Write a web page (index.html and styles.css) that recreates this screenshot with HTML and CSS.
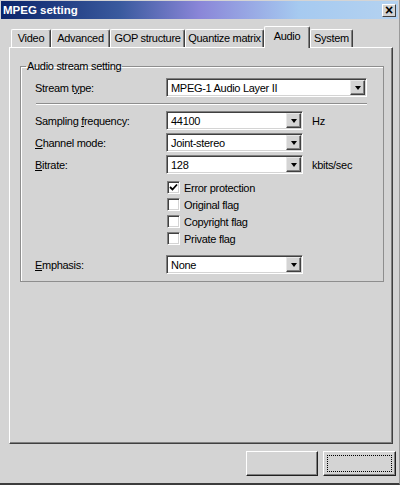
FILE: index.html
```html
<!DOCTYPE html>
<html lang="en">
<head>
    <meta charset="UTF-8">
    <title>MPEG setting</title>
    <link rel="stylesheet" href="styles.css">
</head>
<body>
    <div class="window">
        <div class="titlebar">
            <span class="title">MPEG setting</span>
            <span class="close-btn">&times;</span>
        </div>

        <div class="tabs">
            <div class="tab tab-video">Video</div>
            <div class="tab tab-advanced">Advanced</div>
            <div class="tab tab-gop">GOP structure</div>
            <div class="tab tab-quant">Quantize matrix</div>
            <div class="tab tab-audio active">Audio</div>
            <div class="tab tab-system">System</div>
        </div>

        <div class="panel">
            <fieldset class="group">
                <legend>Audio stream setting</legend>

                <div class="row">
                    <span class="label">Stream t<u>y</u>pe:</span>
                    <div class="combo combo-wide">
                        <span class="value">MPEG-1 Audio Layer II</span>
                        <span class="arrow"></span>
                    </div>
                </div>

                <div class="separator"></div>

                <div class="row">
                    <span class="label">Sampling <u>f</u>requency:</span>
                    <div class="combo">
                        <span class="value">44100</span>
                        <span class="arrow"></span>
                    </div>
                    <span class="unit">Hz</span>
                </div>
                <div class="row">
                    <span class="label"><u>C</u>hannel mode:</span>
                    <div class="combo">
                        <span class="value">Joint-stereo</span>
                        <span class="arrow"></span>
                    </div>
                </div>
                <div class="row">
                    <span class="label"><u>B</u>itrate:</span>
                    <div class="combo">
                        <span class="value">128</span>
                        <span class="arrow"></span>
                    </div>
                    <span class="unit">kbits/sec</span>
                </div>

                <div class="checks">
                    <div class="check">
                        <span class="box">
                            <svg width="11" height="11" viewBox="0 0 11 11"><polyline points="2,5 4.5,7.5 9,2.5" fill="none" stroke="#000" stroke-width="1.8"/></svg>
                        </span>
                        Error protection
                    </div>
                    <div class="check"><span class="box"></span>Original flag</div>
                    <div class="check"><span class="box"></span>Copyright flag</div>
                    <div class="check"><span class="box"></span>Private flag</div>
                </div>

                <div class="row">
                    <span class="label"><u>E</u>mphasis:</span>
                    <div class="combo">
                        <span class="value">None</span>
                        <span class="arrow"></span>
                    </div>
                </div>
            </fieldset>
        </div>

        <div class="footer">
            <button class="btn"></button>
            <button class="btn btn-default"><span class="focus"></span></button>
        </div>
    </div>
</body>
</html>
```

FILE: styles.css
```css
body {
    margin: 0;
    width: 400px;
    height: 485px;
    background: #d4d4d4;
    font-family: 'Liberation Sans', Arial, sans-serif;
    font-size: 11px;
    letter-spacing: -0.3px;
    color: #000;
    overflow: hidden;
}
.window {
    height: 485px;
    box-sizing: border-box;
    border-bottom: 2px solid #3c3c3c;
    border-right: 1px solid #9a9a9a;
    padding-bottom: 1px;
    display: flex;
    flex-direction: column;
}
.titlebar {
    height: 18px;
    margin: 1px 1px 0 1px;
    padding: 0 2px 0 2px;
    display: flex;
    align-items: center;
    justify-content: space-between;
    background: linear-gradient(90deg, #0a246a 0%, #3a5a9e 30%, #8a86d8 50%, #a6caf0 75%, #b4d2f0 100%);
}
.title {
    color: #fff;
    font-weight: bold;
    font-size: 11.5px;
    letter-spacing: 0;
}
.close-btn {
    width: 14px;
    height: 13px;
    box-sizing: border-box;
    background: #d4d4d4;
    border: 1px solid;
    border-color: #fff #404040 #404040 #fff;
    font-size: 14px;
    font-weight: bold;
    line-height: 10px;
    text-align: center;
    letter-spacing: 0;
}
.tabs {
    display: flex;
    align-items: flex-end;
    height: 21px;
    margin-top: 7px;
    padding-left: 11px;
    position: relative;
    z-index: 1;
}
.tab {
    height: 18px;
    box-sizing: border-box;
    border-top: 1px solid #fff;
    border-left: 1px solid #fff;
    border-right: 1px solid #404040;
    box-shadow: inset -1px 0 0 #808080;
    text-align: center;
    line-height: 17px;
    white-space: nowrap;
    border-top-left-radius: 2px;
    border-top-right-radius: 2px;
}
.tab-video { width: 40px; }
.tab-advanced { width: 59px; }
.tab-gop { width: 75px; }
.tab-quant { width: 79px; }
.tab-audio { width: 46px; }
.tab-system { width: 43px; }
.tab.active {
    height: 22px;
    margin-bottom: -1px;
    background: #d4d4d4;
    line-height: 18px;
}
.panel {
    height: 397px;
    box-sizing: border-box;
    margin: 0 6px 0 9px;
    border-top: 1px solid #fff;
    border-left: 1px solid #fff;
    border-right: 1px solid #404040;
    border-bottom: 1px solid #404040;
    box-shadow: inset -1px -1px 0 #808080;
    padding: 12px 8px 0 10px;
}
.group {
    margin: 0;
    padding: 5px 0 4px 14px;
    min-width: 0;
    border: 1px solid #8e8e8e;
    box-shadow: inset 1px 1px 0 #fff;
}
.group legend {
    padding: 0 1px;
    margin-left: -9px;
    line-height: 13px;
}
.row {
    display: flex;
    align-items: center;
    height: 19px;
    margin-bottom: 3px;
}
.label {
    width: 131px;
    flex-shrink: 0;
}
.combo {
    width: 137px;
    height: 19px;
    box-sizing: border-box;
    display: flex;
    align-items: center;
    justify-content: space-between;
    background: #fff;
    border: 1px solid;
    border-color: #808080 #fff #fff #808080;
    box-shadow: inset 1px 1px 0 #404040, inset -1px -1px 0 #d4d4d4;
    padding: 1px 1px 1px 4px;
}
.combo-wide {
    width: 201px;
}
.arrow {
    width: 15px;
    height: 15px;
    box-sizing: border-box;
    background: #d4d4d4;
    border: 1px solid;
    border-color: #e8e8e8 #404040 #404040 #e8e8e8;
    box-shadow: inset -1px -1px 0 #808080;
    display: flex;
    align-items: center;
    justify-content: center;
}
.arrow::after {
    content: '';
    border-left: 3.5px solid transparent;
    border-right: 3.5px solid transparent;
    border-top: 4px solid #000;
    margin-top: 1px;
}
.unit {
    margin-left: 9px;
}
.separator {
    width: 331px;
    margin: 6px 0 6px 1px;
    border-top: 1px solid #8e8e8e;
    border-bottom: 1px solid #fff;
}
.checks {
    margin: 5px 0 8px 132px;
}
.check {
    display: flex;
    align-items: center;
    height: 17px;
}
.box {
    width: 13px;
    height: 13px;
    box-sizing: border-box;
    margin-right: 4px;
    background: #fff;
    border: 1px solid;
    border-color: #808080 #fff #fff #808080;
    box-shadow: inset 1px 1px 0 #404040, inset -1px -1px 0 #d4d4d4;
    display: flex;
    align-items: center;
    justify-content: center;
}
.footer {
    display: flex;
    justify-content: flex-end;
    gap: 5px;
    margin-top: 7px;
    padding-right: 3px;
}
.btn {
    width: 72px;
    height: 25px;
    box-sizing: border-box;
    background: #d4d4d4;
    border: 1px solid;
    border-color: #fff #202020 #202020 #fff;
    box-shadow: inset -1px -1px 0 #808080;
    padding: 0;
    position: relative;
}
.btn-default {
    width: 73px;
}
.btn-default .focus {
    position: absolute;
    top: 3px;
    left: 3px;
    right: 3px;
    bottom: 3px;
    border: 1px dotted #000;
}
```
